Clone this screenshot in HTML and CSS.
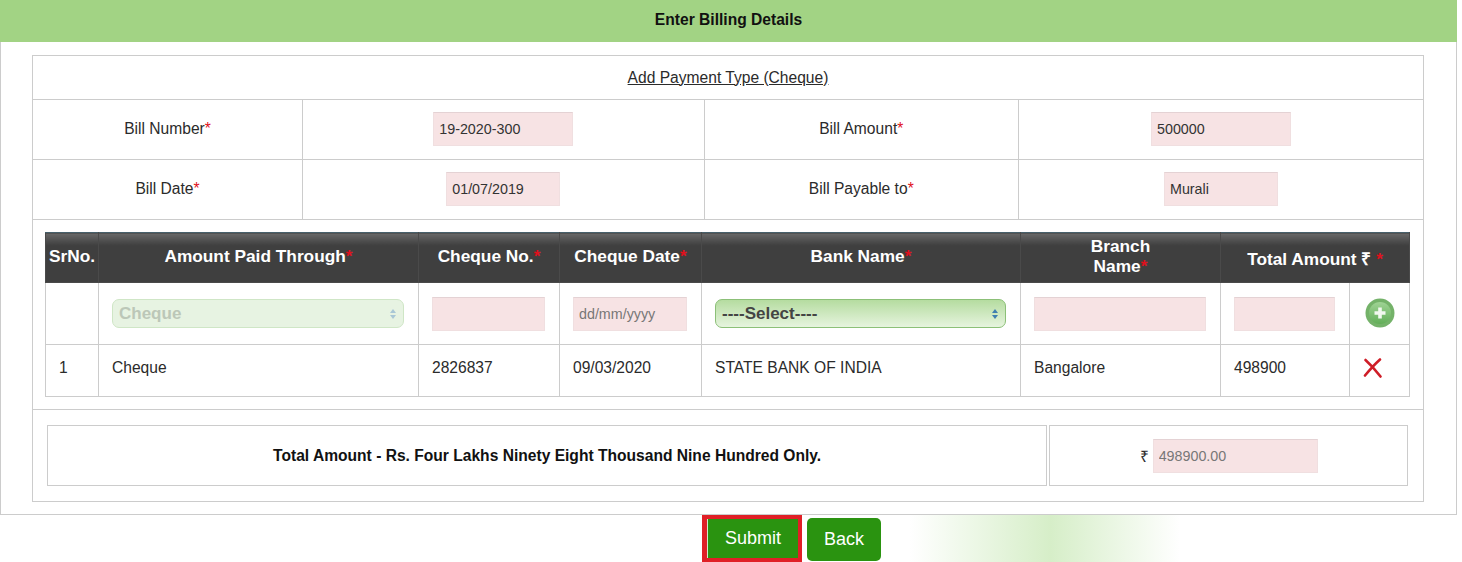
FILE: index.html
```html
<!DOCTYPE html>
<html lang="en">
<head>
    <meta charset="UTF-8">
    <title>Enter Billing Details</title>
    <link rel="stylesheet" href="styles.css">
</head>
<body>
    <div class="panel">
        <div class="panel-heading">Enter Billing Details</div>
        <div class="panel-body">
            <table class="form-table">
                <colgroup>
                    <col class="col-a"><col class="col-b"><col class="col-c"><col class="col-d">
                </colgroup>
                <tr class="title-row">
                    <td colspan="4"><u>Add Payment Type (Cheque)</u></td>
                </tr>
                <tr class="field-row">
                    <td>Bill Number<span class="req">*</span></td>
                    <td><input class="txt w-140" type="text" value="19-2020-300"></td>
                    <td>Bill Amount<span class="req">*</span></td>
                    <td><input class="txt w-140" type="text" value="500000"></td>
                </tr>
                <tr class="field-row">
                    <td>Bill Date<span class="req">*</span></td>
                    <td><input class="txt w-114" type="text" value="01/07/2019"></td>
                    <td>Bill Payable to<span class="req">*</span></td>
                    <td><input class="txt w-114" type="text" value="Murali"></td>
                </tr>
                <tr>
                    <td colspan="4" class="grid-cell">
                        <table class="pay-table">
                            <colgroup>
                                <col class="c-sr"><col class="c-through"><col class="c-no"><col class="c-date">
                                <col class="c-bank"><col class="c-branch"><col class="c-total"><col class="c-act">
                            </colgroup>
                            <tr class="head-row">
                                <th>SrNo.</th>
                                <th>Amount Paid Through<span class="req">*</span></th>
                                <th>Cheque No.<span class="req">*</span></th>
                                <th>Cheque Date<span class="req">*</span></th>
                                <th>Bank Name<span class="req">*</span></th>
                                <th>Branch<br>Name<span class="req">*</span></th>
                                <th colspan="2" class="th-total">Total Amount ₹ <span class="req">*</span></th>
                            </tr>
                            <tr class="input-row">
                                <td></td>
                                <td>
                                    <div class="select-wrap is-disabled">
                                        <select class="sel" disabled><option>Cheque</option></select>
                                        <svg class="updown" width="8" height="12" viewBox="0 0 8 12"><path d="M4 1l3 4H1zM4 11L1 7h6z"/></svg>
                                    </div>
                                </td>
                                <td><input class="txt fill" type="text"></td>
                                <td><input class="txt fill" type="text" placeholder="dd/mm/yyyy"></td>
                                <td>
                                    <div class="select-wrap">
                                        <select class="sel"><option>----Select----</option></select>
                                        <svg class="updown" width="8" height="12" viewBox="0 0 8 12"><path d="M4 1l3 4H1zM4 11L1 7h6z"/></svg>
                                    </div>
                                </td>
                                <td><input class="txt fill" type="text"></td>
                                <td><input class="txt fill" type="text"></td>
                                <td class="act">
                                    <svg class="icon-add" width="30" height="30" viewBox="0 0 30 30">
                                        <defs>
                                            <linearGradient id="plusFill" x1="0" y1="0" x2="0" y2="1">
                                                <stop offset="0" stop-color="#9fd394"/>
                                                <stop offset="1" stop-color="#62ae58"/>
                                            </linearGradient>
                                        </defs>
                                        <circle cx="15" cy="15" r="14.5" fill="#74b269"/>
                                        <circle cx="15" cy="15" r="11" fill="url(#plusFill)"/>
                                        <path d="M15 9.5v11M9.5 15h11" stroke="#f2f8ef" stroke-width="3.6"/>
                                    </svg>
                                </td>
                            </tr>
                            <tr class="data-row">
                                <td class="sr">1</td>
                                <td>Cheque</td>
                                <td>2826837</td>
                                <td>09/03/2020</td>
                                <td>STATE BANK OF INDIA</td>
                                <td>Bangalore</td>
                                <td>498900</td>
                                <td class="act">
                                    <svg class="icon-del" width="20" height="20" viewBox="0 0 20 20">
                                        <path d="M2.5 2C7 6 12.5 12 17.5 18.5M17 1.5C12 6 7 11.5 2 17.5" fill="none" stroke="#cf1d27" stroke-width="2.6" stroke-linecap="round"/>
                                    </svg>
                                </td>
                            </tr>
                        </table>
                    </td>
                </tr>
                <tr>
                    <td colspan="4" class="total-cell">
                        <div class="total-box">
                            <div class="total-words">Total Amount - Rs. Four Lakhs Ninety Eight Thousand Nine Hundred Only.</div>
                            <div class="total-value">₹ <input class="txt w-165 muted" type="text" value="498900.00"></div>
                        </div>
                    </td>
                </tr>
            </table>
        </div>
    </div>
    <div class="btn-bar">
        <div class="highlight"><button class="btn btn-submit">Submit</button></div>
        <button class="btn btn-back">Back</button>
        <div class="glow"></div>
    </div>
</body>
</html>
```

FILE: styles.css
```css
html, body {
    height: 562px;
    overflow: hidden;
}

body {
    margin: 0;
    background-color: #fff;
    color: #2b2b2b;
    font-family: "Liberation Sans", Arial, sans-serif;
    font-size: 15.6px;
}

.panel {
    width: 1457px;
    height: 515px;
    box-sizing: border-box;
    border: 1px solid #ccc;
    border-top: 0;
}

.panel-heading {
    height: 42px;
    line-height: 39px;
    margin: 0 -1px;
    background-color: #a2d384;
    color: #111;
    font-size: 15.6px;
    font-weight: bold;
    text-align: center;
}

.panel-body {
    padding: 13px 31px 0;
}

table {
    border-collapse: collapse;
    table-layout: fixed;
}

.req {
    color: #e0101c;
}

.form-table {
    width: 1391px;
}

.form-table > tbody > tr > td,
.form-table > tr > td {
    border: 1px solid #ccc;
    padding: 0;
    text-align: center;
}

.col-a { width: 270px; }
.col-b { width: 401.5px; }
.col-c { width: 314.5px; }
.col-d { width: 405px; }

.form-table > tbody > .title-row > td {
    height: 43px;
}

.form-table > tbody > .field-row > td {
    height: 57px;
    padding-bottom: 2px;
}

.txt {
    height: 34px;
    box-sizing: border-box;
    padding: 0 5px;
    border: 1px solid #f0dfe0;
    border-top-color: #e4d2d4;
    background-color: #f7e3e4;
    color: #333;
    font-family: inherit;
    font-size: 14.3px;
    vertical-align: middle;
    outline: none;
}

.txt::placeholder {
    color: #777;
}

.w-140 { width: 140px; }
.w-114 { width: 114px; }
.w-165 { width: 165px; }

.fill {
    display: block;
    width: 100%;
}

.muted {
    color: #777;
}

.form-table > tbody > tr > .grid-cell {
    padding: 12px 13px 12px 12px;
}

.pay-table {
    width: 1364px;
}

.c-sr { width: 53px; }
.c-through { width: 320px; }
.c-no { width: 141px; }
.c-date { width: 142px; }
.c-bank { width: 319px; }
.c-branch { width: 200px; }
.c-total { width: 129px; }
.c-act { width: 60px; }

.pay-table th {
    height: 46px;
    padding: 0 1px 3px;
    border: 1px solid #4a4a4a;
    border-top: 1px solid #47606b;
    background: linear-gradient(#686868, #3f3f3f 12px, #3f3f3f);
    color: #fff;
    font-size: 17.3px;
    line-height: 20px;
    text-align: center;
    vertical-align: middle;
}

.pay-table .th-total {
    padding: 3px 1px 0;
}

.pay-table td {
    border: 1px solid #ccc;
    padding: 0 14px 0 13px;
    text-align: left;
}

.pay-table .input-row td {
    height: 61px;
}

.pay-table .data-row td {
    height: 45px;
    padding-bottom: 6px;
}

.pay-table .act {
    padding: 0;
    text-align: left;
}

.icon-add {
    display: block;
    margin: -2px 0 0 15px;
}

.icon-del {
    display: block;
    margin: 0 0 0 13px;
}

.select-wrap {
    position: relative;
}

.sel {
    display: block;
    width: 100%;
    height: 29px;
    padding: 0 6px;
    border: 1px solid #8cc078;
    border-radius: 7px;
    background: linear-gradient(#b5dca0, #e6f4de);
    color: #444;
    font-family: inherit;
    font-size: 17px;
    font-weight: bold;
    appearance: none;
    outline: none;
}

.updown {
    position: absolute;
    top: 9px;
    right: 7px;
    fill: #3f7fb0;
}

.is-disabled .sel {
    border-color: #cfe6c6;
    background: #e7f3e2;
    color: #bcc7b8;
    opacity: 1;
}

.is-disabled .updown {
    fill: #a9c7d6;
}

.form-table > tbody > tr > .total-cell {
    height: 91px;
    padding: 0 15px 0 14px;
}

.total-box {
    display: flex;
    gap: 2px;
    height: 61px;
}

.total-words,
.total-value {
    display: flex;
    align-items: center;
    justify-content: center;
    box-sizing: border-box;
    border: 1px solid #ccc;
}

.total-words {
    width: 1001px;
    color: #111;
    font-weight: bold;
}

.total-value {
    width: 359px;
    gap: 4px;
}

.btn-bar {
    display: flex;
    align-items: center;
    height: 47px;
}

.highlight {
    display: flex;
    width: 100px;
    height: 47px;
    box-sizing: border-box;
    margin-left: 702px;
    border: 4px solid #e01f26;
    border-left-width: 5px;
}

.btn {
    border: 0;
    background-color: #2a9310;
    color: #fff;
    font-family: inherit;
    font-size: 18px;
    cursor: pointer;
}

.btn-submit {
    width: 91px;
    height: 39px;
    border-left: 1px solid #d5e8cc;
}

.btn-back {
    width: 74px;
    height: 43px;
    margin: 2px 0 0 5px;
    border-radius: 5px;
}

.glow {
    width: 270px;
    height: 47px;
    margin-left: 29px;
    background: linear-gradient(90deg, #fff, #d6eec8 52%, #fff);
}
```
